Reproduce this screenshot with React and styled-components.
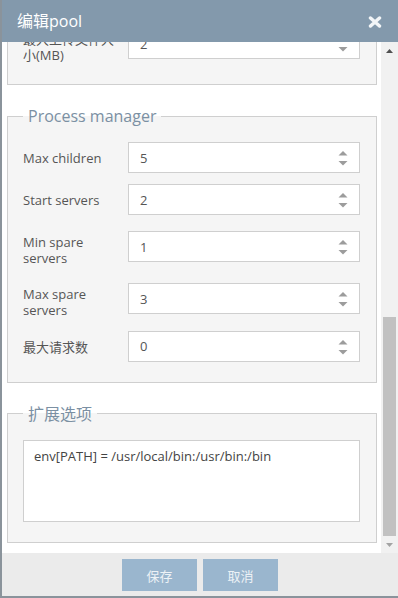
import React, { useLayoutEffect, useRef } from 'react';
import styled, { createGlobalStyle } from 'styled-components';

const GlobalStyle = createGlobalStyle`
    html, body {
        margin: 0;
        padding: 0;
        height: 100%;
    }

    body {
        font-family: "Open Sans", "Noto Sans CJK SC", sans-serif;
        background: #fff;
    }

    #root {
        height: 100%;
    }
`;

const basicRows = [
    { label: '名称', value: 'www' },
    { label: '监听', value: '/tmp/php-cgi.sock' },
    { label: '用户', value: 'www' },
    { label: '用户组', value: 'www' },
    { label: '运行模式', value: 'dynamic', select: true },
    { label: '最大执行时间', value: '300', spin: true },
    { label: '内存限制', value: '128', spin: true },
];

const phpRows = [
    { label: '显示错误', value: 'Off', select: true },
    { label: '日志级别', value: 'notice', select: true },
    { label: '临时目录', value: '/tmp' },
    { label: '请求超时', value: '0', spin: true },
    { label: '最大上传文件大小(MB)', value: '2', select: true },
];

const pmRows = [
    { label: 'Max children', value: '5', spin: true },
    { label: 'Start servers', value: '2', spin: true },
    { label: 'Min spare servers', value: '1', spin: true },
    { label: 'Max spare servers', value: '3', spin: true },
    { label: '最大请求数', value: '0', spin: true },
];

function Arrows({ up }) {
    return (
        <ArrowSvg width="10" height="15" viewBox="0 0 10 15">
            {up && <polygon points="0.5,4.5 5,0 9.5,4.5" />}
            <polygon points="0.5,10 9.5,10 5,14.5" />
        </ArrowSvg>
    );
}

function FormRow({ row }) {
    return (
        <Row>
            <Label>{row.label}</Label>
            <Control>
                <Field type="text" defaultValue={row.value} readOnly />
                {(row.spin || row.select) && <Arrows up={row.spin} />}
            </Control>
        </Row>
    );
}

function Section({ title, rows, children }) {
    return (
        <Fieldset>
            <Legend>{title}</Legend>
            <Rows>
                {rows && rows.map((row) => <FormRow key={row.label} row={row} />)}
                {children}
            </Rows>
        </Fieldset>
    );
}

export default function App() {
    const viewRef = useRef(null);

    useLayoutEffect(() => {
        const el = viewRef.current;
        if (el) el.scrollTop = el.scrollHeight;
    }, []);

    return (
        <>
            <GlobalStyle />
            <Dialog>
                <Header>
                    <Title>编辑pool</Title>
                    <CloseButton aria-label="close">
                        <svg width="14" height="12" viewBox="0 0 14 12">
                            <path d="M2.5 2 L11.5 10 M11.5 2 L2.5 10" stroke="currentColor" strokeWidth="3.4" strokeLinecap="round" />
                        </svg>
                    </CloseButton>
                </Header>

                <Body>
                    <Viewport ref={viewRef}>
                        <Content>
                            <Section title="基本设置" rows={basicRows} />
                            <Section title="PHP设置" rows={phpRows} />
                            <Section title="Process manager" rows={pmRows} />
                            <Section title="扩展选项">
                                <TextArea readOnly defaultValue="env[PATH] = /usr/local/bin:/usr/bin:/bin" />
                            </Section>
                        </Content>
                    </Viewport>

                    <ScrollBar>
                        <ScrollButton>
                            <svg width="7" height="4" viewBox="0 0 7 4">
                                <polygon points="0,4 3.5,0 7,4" fill="#505050" />
                            </svg>
                        </ScrollButton>
                        <Track>
                            <Thumb />
                        </Track>
                        <ScrollButton>
                            <svg width="7" height="4" viewBox="0 0 7 4">
                                <polygon points="0,0 7,0 3.5,4" fill="#a3a3a3" />
                            </svg>
                        </ScrollButton>
                    </ScrollBar>
                </Body>

                <Footer>
                    <Button>保存</Button>
                    <Button>取消</Button>
                </Footer>
            </Dialog>
        </>
    );
}

const Dialog = styled.div`
    display: flex;
    flex-direction: column;
    width: 398px;
    height: 598px;
    box-sizing: border-box;
    border-left: 2px solid #8a939b;
    border-bottom: 2px solid #8a939b;
    overflow: hidden;
`;

const Header = styled.header`
    flex: none;
    display: flex;
    align-items: center;
    justify-content: space-between;
    height: 42px;
    padding: 0 16px 0 15px;
    background-color: #8399ac;
    color: #fff;
`;

const Title = styled.h3`
    margin: 0;
    font-size: 16px;
    font-weight: normal;
    line-height: 42px;
`;

const CloseButton = styled.span`
    display: flex;
    color: #f2f5f7;
    margin-top: 1px;
`;

const Body = styled.div`
    flex: 1;
    min-height: 0;
    display: flex;
    background: #fff;
`;

const Viewport = styled.div`
    flex: 1;
    min-width: 0;
    overflow: hidden;
`;

const Content = styled.div`
    display: flex;
    flex-direction: column;
    gap: 20px;
    padding: 10px 4px 10px 5px;
`;

const ScrollBar = styled.div`
    flex: 0 0 17px;
    display: flex;
    flex-direction: column;
    background: #f1f1f1;
`;

const ScrollButton = styled.div`
    flex: 0 0 17px;
    display: flex;
    align-items: center;
    justify-content: center;
`;

const Track = styled.div`
    flex: 1;
    display: flex;
    flex-direction: column;
    justify-content: flex-end;
`;

const Thumb = styled.div`
    height: 219px;
    margin: 0 2px;
    background: #c1c1c1;
`;

const Fieldset = styled.fieldset`
    flex: none;
    margin: 0;
    min-width: 0;
    padding: 15px 16px 20px 15px;
    border: 1px solid #cfcfcf;
    background: #f5f5f5;
`;

const Legend = styled.legend`
    padding: 0 5px;
    font-size: 16px;
    line-height: 22px;
    color: #7b90a3;
`;

const Rows = styled.div`
    display: flex;
    flex-direction: column;
    gap: 11px;
`;

const Row = styled.div`
    display: flex;
    align-items: center;
    min-height: 31px;
`;

const Label = styled.label`
    flex: 0 0 105px;
    align-self: flex-start;
    box-sizing: border-box;
    padding: 9px 5px 1px 0;
    font-size: 13px;
    line-height: 15.6px;
    color: #555;
`;

const Control = styled.div`
    position: relative;
    flex: 1;
    display: flex;
`;

const Field = styled.input`
    flex: 1;
    min-width: 0;
    height: 31px;
    box-sizing: border-box;
    margin: 0;
    padding: 0 28px 0 11px;
    border: 1px solid #cfcfcf;
    border-radius: 0;
    background: #fff;
    font-family: "Open Sans", "Noto Sans CJK SC", sans-serif;
    font-size: 13px;
    color: #555;
    outline: none;
`;

const ArrowSvg = styled.svg`
    position: absolute;
    top: 9px;
    right: 12px;
    fill: #9c9c9c;
    pointer-events: none;
`;

const TextArea = styled.textarea`
    display: block;
    width: 100%;
    height: 82px;
    box-sizing: border-box;
    margin: 0;
    padding: 6px 10px;
    border: 1px solid #cfcfcf;
    border-radius: 0;
    background: #fff;
    font-family: "Open Sans", "Noto Sans CJK SC", sans-serif;
    font-size: 13px;
    color: #444;
    resize: none;
    outline: none;
`;

const Footer = styled.footer`
    flex: none;
    display: flex;
    justify-content: center;
    gap: 6px;
    height: 43px;
    box-sizing: border-box;
    padding-top: 6px;
    background: #ebebeb;
`;

const Button = styled.button`
    width: 75px;
    height: 32px;
    border: none;
    border-radius: 0;
    background: #9ab6ce;
    color: #edf2f6;
    font-family: "Open Sans", "Noto Sans CJK SC", sans-serif;
    font-size: 13px;
`;
